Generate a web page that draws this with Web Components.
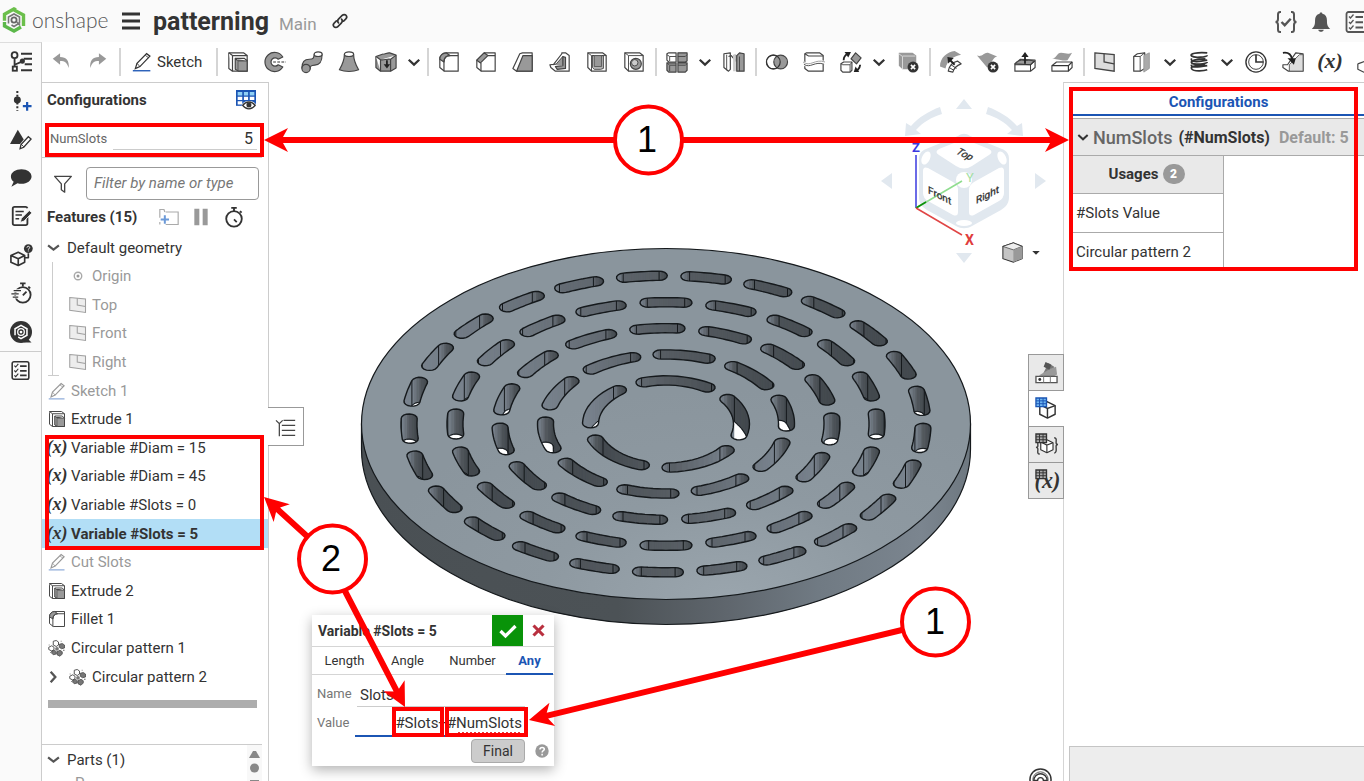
<!DOCTYPE html>
<html lang="en">
<head>
<meta charset="utf-8">
<title>patterning | Main</title>
<style>
html,body{margin:0;height:100%}
body{font-family:Roboto,"Open Sans",sans-serif;font-size:15px;color:#333;background:#fff;overflow:hidden}
</style>
</head>
<body>
<cad-app></cad-app>
<script>
const BASE = `*,:host{box-sizing:border-box}
button{font:inherit;color:inherit;background:none;border:0;padding:0;margin:0;display:flex;align-items:center;justify-content:center}
input{font:inherit;color:inherit;background:none;border:0;padding:0;margin:0;min-width:0;outline:0}
a{color:inherit;text-decoration:none}
svg{display:block}`;

function define(name, html, setup) {
  const t = document.createElement('template');
  t.innerHTML = html;
  customElements.define(name, class extends HTMLElement {
    constructor() {
      super();
      this.attachShadow({mode: 'open'}).append(t.content.cloneNode(true));
    }
    connectedCallback() { if (setup) setup(this, this.shadowRoot); }
  });
}

/* ---------- icons: all on a 24 x 24 grid ---------- */
const D = 'stroke="#444" stroke-width="1.300" fill="#fff" stroke-linejoin="round"';
const G = 'stroke="#444" stroke-width="1.300" fill="#999" stroke-linejoin="round"';
const ERR = '<circle cx="17.500" cy="17.500" r="6" fill="#333"/><path d="M15.200 15.200l4.600 4.600m0-4.600l-4.600 4.600" stroke="#fff" stroke-width="1.800"/>';
const GRID = (c, f) => `<path d="M1 1h11v9H1z" fill="${f}" stroke="${c}" stroke-width="1.400"/><path d="M4.700 1v9M8.400 1v9M1 4h11M1 7h11" stroke="${c}"/>`;
const CUBE = '<path d="M5 8l8-3 8 4v9l-8 4-8-4z" fill="#fff" stroke="#333" stroke-width="1.500" stroke-linejoin="round"/><path d="M5 8l8 4 8-3M13 12v10" fill="none" stroke="#333" stroke-width="1.500"/>';
const LIST = '<rect x="2.500" y="2" width="19" height="20" rx="2" fill="none" stroke="currentColor" stroke-width="1.800"/><path d="M5 6.500l1.500 1.500 3-3.500M5 12l1.500 1.500 3-3.500M5 17.500L6.500 19l3-3.500" fill="none" stroke="currentColor" stroke-width="1.300"/><path d="M11.500 7H19M11.500 12.300H19M11.500 17.600H19" stroke="currentColor" stroke-width="2"/>';
const STOPWATCH = '<circle cx="12" cy="14" r="8.500" fill="none" stroke="#333" stroke-width="2"/><path d="M9 2h6M12 2v4M18.500 5.500l1.800 1.800M12 14.500l3 3" stroke="#333" stroke-width="2" fill="none"/>';
const ICONS = {
  logo: '<path d="M14 1.800L12 1 2.500 6.300v6.500" fill="none" stroke="#6bbf4b" stroke-width="3.400"/><path d="M12 2l9.500 5v11" fill="none" stroke="#6bbf4b" stroke-width="3.400"/><path d="M2.500 14v4L12 23l7-4" fill="none" stroke="#5cb84a" stroke-width="3.400"/><circle cx="12" cy="12" r="2.600" fill="none" stroke="#666" stroke-width="1.800"/><path d="M6.500 15.500V9L12 6l5.500 3v6L12 18.500l-2.500-1.500M15 14l3 3.500" fill="none" stroke="#777" stroke-width="1.600"/>',
  menu: '<path d="M3 5h18M3 12h18M3 19h18" stroke="#333" stroke-width="3"/>',
  link: '<g fill="none" stroke="#333" stroke-width="2.200" stroke-linecap="round"><path d="M10 14.500c-2-2-1-4 .3-5.300l4.600-4.600c1.800-1.800 4.100-1.300 5.100-.2s1.400 3.200-.2 4.800l-3 3"/><path d="M14 9.500c2 2 1 4-.3 5.300l-4.600 4.600c-1.800 1.800-4.100 1.300-5.100.2s-1.400-3.200.2-4.800l3-3"/></g>',
  status: '<path d="M7 2H6C4.500 2 4 3 4 4.500V9c0 2-1 3-2.500 3C3 12 4 13 4 15v4.500C4 21 4.500 22 6 22h1M17 2h1c1.500 0 2 1 2 2.500V9c0 2 1 3 2.500 3-1.500 0-2.500 1-2.500 3v4.500c0 1.500-.5 2.500-2 2.500h-1" fill="none" stroke="#555" stroke-width="2"/><path d="M7.500 12l3.200 3.200 6-6.500" fill="none" stroke="#555" stroke-width="2.400"/>',
  bell: '<path d="M12 1.500c1 0 1.500.5 1.500 1.500 3.500.8 5 3.500 5 7 0 5 .5 6.500 3.500 9.500H2c3-3 3.500-4.500 3.500-9.500 0-3.500 1.500-6.200 5-7 0-1 .5-1.500 1.500-1.500zM9 20.500h6c-.5 3-5.500 3-6 0z" fill="#555"/>',
  list: LIST,
  tree: '<g fill="none" stroke="#333" stroke-width="2"><circle cx="5" cy="4.500" r="3.200"/><path d="M5 8v9M5 15l8-3.500"/><rect x="3" y="17" width="4.500" height="4.500"/><path d="M12 3h12M15 8.500h9M16 14.500h8M12 21h12" stroke-width="2.200"/></g><circle cx="13.500" cy="11" r="2.800" fill="#333"/>',
  add: '<path d="M8 1v22" stroke="#333" stroke-width="2.200" stroke-dasharray="2.200 2"/><circle cx="8" cy="11" r="3.800" fill="#333"/><path d="M14 17.500h9.500M18.700 13v9.500" stroke="#1b55b4" stroke-width="2.400"/>',
  appearance: '<path d="M8.500 2L0 17.500h11l4-5z" fill="#333"/><path d="M11 22.500l1-4.500 8-8.500 3 2.500-8 9z" fill="#fff" stroke="#333" stroke-width="1.400"/><path d="M12 17.500l3 3" stroke="#333"/>',
  comment: '<path d="M12.500 2.500C18.800 2.500 23.500 6 23.500 10.300s-4.700 8-11 8c-1.500 0-3-.2-4.300-.6L1.500 21.500l2.500-5.300C2.100 14.900 1 12.500 1 10.300 1 6 6.200 2.500 12.500 2.500z" fill="#333"/>',
  note: '<path d="M19 12v8c0 1.200-.8 2-2 2H5c-1.200 0-2-.8-2-2V4c0-1.200.8-2 2-2h12c1 0 1.700.5 2 1.500" fill="none" stroke="#333" stroke-width="2"/><path d="M6 7h9M6 11h7M6 15h4" stroke="#333" stroke-width="1.700"/><path d="M11 19l1.500-4.500L21 6l3 2.500-8.500 9z" fill="#333" stroke="#fafafa"/>',
  help3d: '<g fill="none" stroke="#333" stroke-width="1.800" stroke-linejoin="round"><path d="M1 12.500L9 9l7 3.500V20l-7 3.500L1 20zM1 12.500l8 3.500 7-3.500M9 15.500V23"/><path d="M16 15h4V10"/></g><circle cx="20" cy="5" r="4.800" fill="#333"/><path d="M18.500 4c0-2 3-2 3 0 0 1-1.500 1-1.500 2.200m0 .9v1" fill="none" stroke="#fff"/>',
  perf: '<circle cx="14" cy="14" r="8.500" fill="none" stroke="#333" stroke-width="2"/><path d="M11 1.500h6M14 1.500V5M20 5l2 2M14 14.500l4-4" stroke="#333" stroke-width="2"/><path d="M3 9.500h9M1.500 13h9M2.500 16.500h7" stroke="#fafafa" stroke-width="3"/><path d="M4 9.500h8M1.500 13h8M3 16.500h6" stroke="#333" stroke-width="1.300"/>',
  learn: '<circle cx="12" cy="12" r="12" fill="#333"/><path d="M18 18l5.500 5.500h-8z" fill="#333"/><path d="M5.500 15.500v-7L12 4.800l6.500 3.700v7L12 19.200l-3-1.700" fill="none" stroke="#fff" stroke-width="1.700"/><circle cx="12" cy="12" r="3.600" fill="none" stroke="#fff" stroke-width="1.400"/><circle cx="12" cy="12" r="1.500" fill="#fff"/>',
  undo: '<path d="M3 8.500L11 2.500v4c7 0 10 4 9.500 12-2-5.500-4-7.500-9.500-7.500v4z" fill="#999"/>',
  redo: '<path d="M21 8.500L13 2.500v4c-7 0-10 4-9.500 12 2-5.500 4-7.500 9.500-7.500v4z" fill="#999"/>',
  pencil: '<path d="M4 20l2-6.500L17.500 2l4 3L9.500 17.500z" fill="#fff" stroke="#333" stroke-width="1.500"/><path d="M6 13.500l3.500 4M16 4l4 3" stroke="#333"/><path d="M1 22.500h21" stroke="#1b55b4" stroke-width="1.600"/>',
  chevron: '<path d="M5 9l7 6.500L19 9" fill="none" stroke="currentColor" stroke-width="3"/>',
  fold: '<path d="M2 8l10 8 10-8" fill="none" stroke="#555" stroke-width="4"/>',
  right: '<path d="M8 3l8 9-8 9" fill="none" stroke="currentColor" stroke-width="4"/>',
  extrude: `<path d="M2 2h16l4 3v17H6l-4-3z" ${D}/><path d="M2 2l4 3v17M6 5h16" ${D} fill="none"/><path d="M9 8l2 2h11v12h-9l-4-2z" ${G}/><path d="M9 8h10l3 3" ${D} fill="#ccc"/><path d="M12 11v11M12 11h10" stroke="#555"/>`,
  revolve: `<path d="M20.500 6.500A10.500 10.500 0 1 0 20.500 17.500L15.500 15a4.500 4.500 0 1 1 0-6z" ${G}/><path d="M10 12h14" stroke="#333" stroke-width="1.300" stroke-dasharray="3 1.500"/>`,
  sweep: `<path d="M1 18.500c0-7 3.500-9.500 8-9.500 5 0 5-2 5.500-5.500h8.500c0 8-2 11.500-8 12-4.500.4-5 1-5 4z" ${G}/><ellipse cx="18.700" cy="3.500" rx="4.300" ry="2.500" ${D}/><circle cx="5.500" cy="19" r="4.500" ${G}/>`,
  loft: `<path d="M7 3.500c0 6-2 11-5.500 17 6 2.500 15 2.500 21 0C19 14.500 17 9.500 17 3.500z" ${G}/><ellipse cx="12" cy="3.500" rx="5" ry="2.500" ${D}/>`,
  thicken: `<path d="M1 6l7-2.500c3 .5 5-2 8-1.500l7 2.500v14L17 22H6l-5-4z" ${G}/><path d="M1 6l5 3.500V22M6 9.500c4 1 7-1.500 11-.5l6-4.500M17 9v13" ${D} fill="none"/><path d="M13 10v6" stroke="#222" stroke-width="2"/><path d="M9.500 14.500h7L13 19z" fill="#222"/>`,
  fillet: `<path d="M2 9c0-4 3-7 7-7h13v20H7l-5-4z" ${D}/><path d="M2 9c0-4 3-7 7-7l4 3c-4 0-6.500 2.500-6.500 7z" ${G}/><path d="M22 5H13C9 5 6.500 8 6.500 12v10" stroke="#444" stroke-width="1.300" fill="none"/>`,
  chamfer: `<path d="M2 10l8-8h12v20H7l-5-4z" ${D}/><path d="M2 10l8-8 4 3-8 8z" ${G}/><path d="M14 5h8M6.500 13v9" stroke="#444" stroke-width="1.300"/>`,
  draft: `<path d="M1 19L8.500 3l3-1h10.500v20H5z" ${D}/><path d="M5 22L12 5h10v17z" ${G}/>`,
  rib: `<path d="M1 15l4-.5L14 3l0-1h4l4 3v17H7l-5-4z" ${D}/><path d="M7 17l8-1V6l3 1v12l-9 1z" ${G}/><path d="M5 15l3-1 7-8v10" fill="#999" stroke="#444"/>`,
  shell: `<path d="M2 2h16l4 3v17H6l-4-4z" ${D}/><path d="M7 5h12v14l-3 1H9l-2-2z" fill="#bbb" stroke="#444"/><path d="M2 2l4 3v17M6 5h16" stroke="#444" fill="none"/><path d="M9 5v12h8V5z" fill="#999" stroke="#555"/>`,
  hole: `<path d="M2 2h16l4 3v17H6l-4-4z" ${D}/><path d="M2 2l4 3v17M6 5h16" stroke="#444" fill="none"/><circle cx="14" cy="14" r="6" ${G}/><circle cx="12.800" cy="12.800" r="3.500" fill="#ccc" stroke="#444"/>`,
  pattern: `<path d="M1 3l2-1h8v10H3l-2-2z" ${D}/><path d="M13 2h10v9l-2 1h-8zM1 13h10v10H3l-2-2zM13 13h10v8l-2 2h-8z" ${G}/><path d="M1 4l3 2h7M4 6v5M13 6h8l2-2M4 16v6M1 13l3 2.500h7M13 15.500h8l2-1.500" stroke="#444" fill="none"/>`,
  mirror: `<path d="M1 3L8 2v18l-2 2-5-4z" ${D}/><path d="M6 6l3-1 5 6V5h-3" ${D}/><path d="M11 4l3-1v19h-3z" fill="#ccc"/><path d="M15 5l3-3 5 1v19h-8z" ${G}/><path d="M4 4v17M18 6v16" stroke="#444"/>`,
  boolean: `<circle cx="8" cy="12" r="7.500" ${D}/><circle cx="16" cy="12" r="7.500" ${G}/><circle cx="8" cy="12" r="7.500" fill="none" stroke="#333" stroke-width="1.300"/>`,
  split: `<path d="M2 3l2-1h14l4 3v17H6l-4-3z" ${D}/><path d="M2 3l4 2.500h16" fill="none" stroke="#444" stroke-width="1.200"/><path d="M0 13c8 6 13-4 24 0" fill="none" stroke="#fff" stroke-width="4"/><path d="M0 12c8 6 13-4 24 0" fill="none" stroke="#999"/><path d="M1 14.500c7 5 12-4 22 0" fill="none" stroke="#444"/>`,
  transform: `<path d="M1 14l3-2h9v9l-2 2H3l-2-2z" ${D}/><path d="M1 14l2 1h8v8M11 15l2-3" fill="none" stroke="#444"/><path d="M17 2l6 5.500-5 6.500-6-5.500z" ${G}/><path d="M4 10c0-3 1-5 4-7" stroke="#222" stroke-width="2" fill="none"/><path d="M5 1l7 0-3 6z" fill="#222"/><path d="M22 15c0 3-1 4-3 6" stroke="#222" stroke-width="2" fill="none"/><path d="M21 23l-6 0 2-6z" fill="#222"/>`,
  delpart: `<path d="M2 2h15l4 3v15H6l-4-4z" fill="#999"/><path d="M2 3l4 3v14M6 5.500h14" stroke="#ddd" fill="none"/>${ERR}`,
  moveface: `<path d="M0 17C0 7 8 1 16 0l7 4C14 6 8 10 6 19z" fill="#999"/><path d="M9 22c1-7 6-10 10-11l4 3c-5 2-8 5-9 9z" ${D}/><path d="M12 15l6 4M10 18l5 3" stroke="#333"/><path d="M16 15L10 9" stroke="#222" stroke-width="2"/><path d="M8 6.500l7 1-6 6z" fill="#222"/>`,
  delface: `<path d="M0 5c6 2 8-4 12-3l10 4c-5 1-6 8-11 12z" fill="#999"/>${ERR}`,
  replace: `<path d="M1 14l6-5 16 1v8l-5 4H1z" ${D}/><path d="M1 14c4-4 6-5 9-4s6-1 12 1l-4 4z" ${G}/><path d="M1 15h17l5-4M18 15v7" fill="none" stroke="#333"/><path d="M12 14V5" stroke="#222" stroke-width="2"/><path d="M8 6.500h8L12 1z" fill="#222"/>`,
  offset: `<path d="M1 8c5 1 5-6 10-6s7 2 12 0l-5 8c-5 1-8 0-17-2z" fill="#999"/><path d="M1 16l5-4h17v6l-4 4H1z" ${D}/><path d="M1 16h18l4-4M19 16v6" fill="none" stroke="#333" stroke-width="1.300"/>`,
  plane: '<path d="M1 2l21 2v18L1 19z" fill="#ddd" stroke="#444" stroke-width="1.400"/><path d="M11 3V12l11 2" fill="none" stroke="#444" stroke-width="1.400"/>',
  planeoff: `<path d="M3 6l4-3 8-1v17l-5 3H3z" ${D}/><path d="M3 6h7v16M10 6l5-4" fill="none" stroke="#444"/><path d="M14 5l6-3v17l-6 4z" fill="#aaa" stroke="#999"/>`,
  helix: '<path d="M21 2C10 1 1 3 4 5.500s17 1 17-1M4 8c-2 4 5 4.500 17 2M19 8.500c-10 0-17 2-15 4.500s17 1 17-1M4 15c-2 3 5 3 17 1M19 15.500c-10 0-17 1-15 4s13 2.500 17 1" fill="none" stroke="#333" stroke-width="1.900"/>',
  sector: '<circle cx="12" cy="12" r="11" fill="#fff" stroke="#333" stroke-width="1.500"/><circle cx="12" cy="12" r="8" fill="#fff" stroke="#333"/><path d="M12 4v8h8" fill="none" stroke="#333" stroke-width="1.800"/>',
  derived: `<path d="M1 15h5l9-13 8 1v19H7l-6-4z" ${D}/><path d="M8 15L19 4h4v18H8z" fill="#ddd" stroke="#555"/><path d="M1 2c6-1 9 2 10 7" fill="none" stroke="#222" stroke-width="2"/><path d="M6 8h9l-2 7z" fill="#222"/>`,
  variable: '<text x="12" y="19" text-anchor="middle" font-family="Liberation Serif,serif" font-style="italic" font-weight="700" font-size="24" fill="#333">(x)</text>',
  partial: `<path d="M2 14l8-3v-6h6M2 14v6l6 3 8-2v-8" ${D}/>`,
  configtable: '<path d="M0 0h24v19H0z" fill="#1b55b4"/><path d="M2 2.500h5.500v4H2zM9.500 2.500h5v4h-5zM16.500 2.500H22v4h-5.500z" fill="#8fd0f5"/><path d="M2 8h5.500v4H2zM9.500 8h5v4h-5zM16.500 8H22v4h-5.500zM2 13.500h5.500v4H2z" fill="#fff"/><ellipse cx="15.500" cy="18.500" rx="8.500" ry="5.300" fill="#fff"/><path d="M8 18.500c4-5.500 11-5.500 15 0-4 5.500-11 5.500-15 0z" fill="#fff" stroke="#333" stroke-width="1.600"/><circle cx="15.500" cy="18" r="3" fill="#333"/>',
  funnel: '<path d="M2 4h20l-8 9V23l-4-3v-7z" fill="none" stroke="#444" stroke-width="1.600" stroke-linejoin="round"/>',
  folder: '<path d="M7 6L6 3H1v10M8 6h15v15H8M1 21v-3" fill="none" stroke="#aaa" stroke-width="1.400"/><path d="M2 15h10M7 10v10" stroke="#6c9ad8" stroke-width="2.400"/>',
  pause: '<path d="M4 2h6v20H4zM14 2h6v20h-6z" fill="#999"/>',
  stopwatch: STOPWATCH,
  origin: '<circle cx="12" cy="12" r="5" fill="none" stroke="#555" stroke-width="1.800"/><circle cx="12" cy="12" r="2" fill="#333"/>',
  circpattern: `<g stroke="#444" stroke-width="1.200" fill="#fff"><path d="M7 3l4-1 3 2v4l-3 2-4-2zM1 11l4-2 3 2v3l-3 2-4-2z"/></g><g stroke="#444" fill="#777"><path d="M15 7l4-1 3 2v4l-4 1-3-2zM5 16l4-1 2 2v3l-4 1-2-2zM12 17l4-2 3 2v3l-3 3-4-2z"/></g><circle cx="12" cy="13" r="2.500" fill="#777"/><path d="M1 8h1M20 15h2M3 18h1M17 3h1" stroke="#333"/>`,
  tree2: '<path d="M0 4l4 4 4-4M4 8v15" fill="none" stroke="#444" stroke-width="1.500"/><path d="M9 4h14M7 10h16M7 16h16M7 22h16" stroke="#444" stroke-width="1.500"/>',
  swatch: '<path d="M8 14L14 2l6 4-4 10z" fill="#777"/><path d="M4 15L16 8l6-2 1 8-7 4z" fill="#999"/><path d="M11 1l6 3-2 5-6-3z" fill="#555"/><path d="M1 16h22v6.500H1z" fill="#fff" stroke="#555" stroke-width="1.400"/><path d="M9 16v6.500M16 16v6.500" stroke="#777"/><circle cx="5" cy="19.300" r="1.500" fill="#333"/>',
  tabconfig: CUBE + GRID('#1b55b4', '#6fb5f0'),
  tabbom: '<g transform="translate(2 3) scale(.8)">' + CUBE + '</g><path d="M5 8c-3 0-2 3-2 5s-1 2-2 2c1 0 2 0 2 2s-1 5 2 5M20 5c3 0 2 3 2 5s1 2 2 2c-1 0-2 0-2 2s1 7-2 7" fill="none" stroke="#444" stroke-width="1.500"/>' + GRID('#333', '#aaa'),
  tabvar: '<text x="13" y="20" text-anchor="middle" font-family="Liberation Serif,serif" font-style="italic" font-weight="700" font-size="23" fill="#333">(x)</text>' + GRID('#333', '#aaa'),
  check: '<path d="M3 12l6 6L21 6" fill="none" stroke="#fff" stroke-width="4"/>',
  cross: '<path d="M4 4l16 16M20 4L4 20" fill="none" stroke="#b9303f" stroke-width="5"/>',
  help: '<circle cx="12" cy="12" r="11.500" fill="#999"/><path d="M8.500 9.500c0-5 7.500-4.500 7.500-.5 0 2.500-3.800 2.500-3.800 5.500M12.200 16.500v3" fill="none" stroke="#fff" stroke-width="2.600"/>',
  shaded: '<path d="M1 5l12-4 10 4v14l-10 4L1 19z" fill="#c4c4c4" stroke="#333" stroke-width="1.200"/><path d="M1 5l12-4 10 4-10 4z" fill="#eee" stroke="#333" stroke-width=".8"/><path d="M13 9l10-4v14l-10 4z" fill="#999"/>',
  caret: '<path d="M3 7h18l-9 9z" fill="#333"/>',
  measure: '<circle cx="12" cy="12" r="11" fill="#fff" stroke="#333" stroke-width="1.600"/><circle cx="12" cy="12" r="8" fill="none" stroke="#555"/><path d="M5 13a7 7 0 0 1 14 0h-4a3 3 0 0 0-6 0z" fill="#fff" stroke="#333" stroke-width="1.400"/>'
};
define('cad-icon', `<style>:host{display:block;flex:none;width:var(--s,20px);height:var(--s,20px)}svg{display:block;width:100%;height:100%;overflow:visible}</style><svg viewBox="0 0 24 24" aria-hidden="true"></svg>`,
  (el, r) => { r.querySelector('svg').innerHTML = ICONS[el.getAttribute('name')] || ''; });

/* ---------- header ---------- */
define('cad-header', `<style>${BASE}
:host{display:flex;align-items:center;height:42px;background:#fafafa;padding-left:2px}
.brand{display:flex;align-items:center;gap:6px;font:300 21px/24px Lato,sans-serif;color:#555;margin-top:-3px;width:116px}
h1{font-size:25px;line-height:28px;font-weight:700;margin:2px 10px 0}
.ws{font-size:17px;color:#999;margin-right:14px;padding-top:5px}
.right{margin-left:auto;display:flex;gap:12px;margin-right:-4px;color:#555;padding-top:2px}
</style>
<a class="brand" href="#"><cad-icon name="logo" style="--s:24px"></cad-icon>onshape</a>
<button aria-label="Menu" style="margin-left:1px"><cad-icon name="menu" style="--s:24px"></cad-icon></button>
<h1>patterning</h1><span class="ws">Main</span>
<button aria-label="Copy link"><cad-icon name="link" style="--s:18px"></cad-icon></button>
<div class="right"><button aria-label="Status"><cad-icon name="status" style="--s:24px"></cad-icon></button>
<button aria-label="Notifications"><cad-icon name="bell" style="--s:22px"></cad-icon></button>
<button aria-label="Tasks"><cad-icon name="list" style="--s:24px"></cad-icon></button></div>`);

/* ---------- left rail ---------- */
define('cad-rail', `<style>${BASE}
:host{display:block;flex:none;width:42px;background:#fafafa;border-right:1px solid #ccc;border-top:1px solid #ddd}
nav{display:flex;flex-direction:column;height:309px;border-bottom:1px solid #ccc}
nav button{flex:1}.last{width:100%;height:37px}
</style><nav aria-label="Document panels"></nav><button class="last" aria-label="Tasks"><cad-icon name="list" style="--s:21px"></cad-icon></button>`,
  (el, r) => { r.querySelector('nav').innerHTML = ['tree','add','appearance','comment','note','help3d','perf','learn'].map(n => `<button aria-label="${n}"><cad-icon name="${n}" style="--s:22px"></cad-icon></button>`).join(''); });

/* ---------- toolbar ---------- */
define('cad-toolbar', `<style>${BASE}
:host{display:flex;align-items:center;height:40px;background:#fff;overflow:hidden}
button{width:37px;height:38px;flex:none}
.chev{width:20px;color:#333;--s:18px}
i{width:2px;height:28px;background:#d5d5d5;flex:none;margin:0 1px 0 3px}
.sk{width:auto;gap:5px;padding:0 11px 0 10px}
</style>`, (el, r) => {
  const items = 'undo redo | SKETCH | extrude revolve sweep loft thicken v | fillet chamfer draft rib shell hole | pattern v mirror | boolean split transform v delpart | moveface delface replace offset | plane planeoff v helix v sector derived variable partial'.split(' ');
  r.innerHTML += items.map(n => n === '|' ? '<i></i>' : n === 'v' ? '<button class="chev" aria-label="More"><cad-icon name="chevron"></cad-icon></button>'
    : n === 'SKETCH' ? '<button class="sk"><cad-icon name="pencil"></cad-icon>Sketch</button>'
    : `<button aria-label="${n}"><cad-icon name="${n}" style="--s:22px"></cad-icon></button>`).join('');
});

/* ---------- feature panel ---------- */
define('feature-row', `<style>${BASE}
:host{display:flex;align-items:center;padding-left:6px;gap:5px;color:#333}
:host([dim]){color:#999}
:host([dim]) cad-icon{opacity:.5}
:host([selected]){background:#b2def6;font-weight:700}
:host([child]){padding-left:27px}
:host([top]){gap:7px;padding-left:5px}
:host([group]) .pre{display:block}
.pre{display:none;color:#555;margin:0 4px 0 -2px}
</style><cad-icon class="pre" name="right" style="--s:14px"></cad-icon><cad-icon class="ic"></cad-icon><span><slot></slot></span>`,
  (el, r) => {
    const i = r.querySelector('.ic');
    i.setAttribute('name', el.getAttribute('icon'));
    i.style.setProperty('--s', el.hasAttribute('top') ? '13px' : '18px');
    i.connectedCallback();
  });

define('feature-panel', `<style>${BASE}
:host{display:flex;flex-direction:column;flex:none;width:227px;border-top:1px solid #ccc;border-right:1px solid #ccc;background:#fff;min-height:0}
h2{font-size:15px;line-height:20px;margin:0;font-weight:700;flex:1}
.conf{display:flex;align-items:center;height:34px;padding:0 12px 0 5px;flex:none}
.num{display:flex;align-items:center;height:38px;flex:none;margin:3px 6px 0 0;padding:0 5px 0 8px;gap:6px;border-bottom:1px solid #ccc;color:#666;font-size:13px}
.num label{width:57px}
.num input{flex:1;text-align:right;font-size:16px;color:#333;border-bottom:1px solid #ccc;height:23px;padding-right:4px}
.filter{display:flex;align-items:center;gap:13px;height:42px;flex:none;padding:8px 9px 0 11px}
.filter input{flex:1;height:33px;border:1px solid #999;border-radius:4px;padding:0 7px;font-style:italic}
.filter input::placeholder{color:#777;opacity:1}
.feat{display:flex;align-items:center;height:33px;flex:none;padding-left:5px;gap:12px}
.feat h2{flex:none;width:100px}
.list{display:grid;grid-auto-rows:1fr;height:458px;flex:none;position:relative}
.guide{position:absolute;left:6px;top:29px;height:114px;width:11px;border-bottom:1px solid #ccc}
.guide::before{content:"";position:absolute;left:4px;top:0;bottom:0;border-left:1px solid #ccc}
feature-row[top]{height:29px}
.bar{height:8px;background:#adadad;margin:9px 11px 0 6px;flex:none}
.parts{margin-top:36px;margin-right:6px;border-top:1px solid #ccc;display:flex;flex:1;overflow:hidden;min-height:0}
.parts div{flex:1}
.p{padding-left:33px;color:#999}
.sb{flex:none;width:15px;height:60px;background:#f8f8f8}
</style>
<div class="conf"><h2>Configurations</h2><button aria-label="Show configurations"><cad-icon name="configtable"></cad-icon></button></div>
<div class="num"><label for="n">NumSlots</label><input id="n" value="5"></div>
<div class="filter"><cad-icon name="funnel"></cad-icon><input aria-label="Filter" placeholder="Filter by name or type"></div>
<div class="feat"><h2>Features (15)</h2><button aria-label="Add folder"><cad-icon name="folder"></cad-icon></button><button aria-label="Pause"><cad-icon name="pause"></cad-icon></button><button aria-label="Timing"><cad-icon name="stopwatch" style="--s:22px"></cad-icon></button></div>
<div class="list"><span class="guide"></span>
<feature-row top icon="fold">Default geometry</feature-row>
<feature-row child dim icon="origin">Origin</feature-row>
<feature-row child dim icon="plane">Top</feature-row>
<feature-row child dim icon="plane">Front</feature-row>
<feature-row child dim icon="plane">Right</feature-row>
<feature-row dim icon="pencil">Sketch 1</feature-row>
<feature-row icon="extrude">Extrude 1</feature-row>
<feature-row icon="variable">Variable #Diam = 15</feature-row>
<feature-row icon="variable">Variable #Diam = 45</feature-row>
<feature-row icon="variable">Variable #Slots = 0</feature-row>
<feature-row selected icon="variable">Variable #Slots = 5</feature-row>
<feature-row dim icon="pencil">Cut Slots</feature-row>
<feature-row icon="extrude">Extrude 2</feature-row>
<feature-row icon="fillet">Fillet 1</feature-row>
<feature-row icon="circpattern">Circular pattern 1</feature-row>
<feature-row group icon="circpattern">Circular pattern 2</feature-row></div>
<div class="bar"></div>
<div class="parts"><div><feature-row top icon="fold">Parts (1)</feature-row><div class="p">P</div></div>
<svg class="sb" viewBox="0 0 15 60"><path d="M2 13h11L9 6H6z" fill="#888"/><circle cx="7.500" cy="23" r="4.500" fill="#888"/><path d="M3 35h9v9H3z" fill="#888"/></svg></div>`);

/* ---------- the slotted disc ---------- */
define('slotted-disc', `<style>:host{display:block;width:612px;height:380px}svg{display:block;overflow:visible}</style>
<svg width="612" height="380" viewBox="-306 -177 612 380" role="img" aria-label="Disc with circular slot patterns">
<defs><linearGradient id="side"><stop offset="0" stop-color="#4a5054"/><stop offset=".42" stop-color="#4c5256"/><stop offset=".6" stop-color="#5f666d"/><stop offset=".75" stop-color="#707a83"/><stop offset=".92" stop-color="#7b858f"/><stop offset="1" stop-color="#6e7880"/></linearGradient>
<radialGradient id="top" cx=".6" cy="1" r=".6"><stop offset="0" stop-color="#9aa5ad"/><stop offset=".5" stop-color="#8e99a1"/><stop offset="1" stop-color="#8a959d"/></radialGradient></defs>
<path d="M-304.500 0v25a304.500 175.500 0 0 0 609 0V0z" fill="url(#side)" stroke="#15191c" stroke-width="1.200"/>
<ellipse rx="304.500" ry="175.500" fill="url(#top)" stroke="#15191c" stroke-width="1.200"/><g></g></svg>`, (el, r) => {
  const K = 0.577, H = 25, W = 8, rad = Math.PI / 180;
  // radius, slot count, angle of one slot, half of its arc
  const rings = [[75.5, 5, -82, 25], [120.5, 10, -81.2, 11.2], [166, 15, -93, 6.8], [211, 20, -90, 4.9], [257, 25, -81, 3.9]];
  const stops = [[66, 72, 77], [86, 92, 98], [122, 132, 143]];
  const shade = nx => {
    const v = nx < 0 ? nx + 1 : nx, a = nx < 0 ? stops[0] : stops[1], b = nx < 0 ? stops[1] : stops[2];
    return 'rgb(' + a.map((c, i) => Math.round(c + (b[i] - c) * Math.min(1, v))) + ')';
  };
  const f = n => n.toFixed(1);
  let out = '', id = 0;
  for (const [R, n, start, half] of rings) for (let k = 0; k < n; k++) {
    const c = (start + k * 360 / n) * rad, a0 = c - half * rad, a1 = c + half * rad, pts = [];
    const push = (x, y, nx, ny, j) => pts.push({x, y: y * K, nx, ny, j});
    for (let i = 0; i <= 10; i++) { const a = a0 + (a1 - a0) * i / 10; push((R + W) * Math.cos(a), (R + W) * Math.sin(a), -Math.cos(a), -Math.sin(a), i % 10 === 0); }
    for (let i = 1; i < 8; i++) { const b = a1 + Math.PI * i / 8; push(R * Math.cos(a1) + W * Math.cos(b), R * Math.sin(a1) + W * Math.sin(b), -Math.cos(b), -Math.sin(b)); }
    for (let i = 0; i <= 10; i++) { const a = a1 - (a1 - a0) * i / 10; push((R - W) * Math.cos(a), (R - W) * Math.sin(a), Math.cos(a), Math.sin(a), i % 10 === 0); }
    for (let i = 1; i < 8; i++) { const b = a0 + Math.PI + Math.PI * i / 8; push(R * Math.cos(a0) + W * Math.cos(b), R * Math.sin(a0) + W * Math.sin(b), -Math.cos(b), -Math.sin(b)); }
    const path = dy => 'M' + pts.map(p => f(p.x) + ' ' + f(p.y + dy)).join('L') + 'Z';
    let edges = '';
    const walls = [];
    pts.forEach((p, i) => {
      const q = pts[(i + 1) % pts.length];
      if (p.ny + q.ny > 0) {
        const s = shade((p.nx + q.nx) / 2);
        walls.push([p.y + q.y, `<path d="M${f(p.x)} ${f(p.y)}L${f(q.x)} ${f(q.y)}v${H}L${f(p.x)} ${f(p.y + H)}z" fill="${s}" stroke="${s}" stroke-width="1.500" stroke-linejoin="round"/>`]);
      }
      if (p.j && p.ny > 0) edges += `M${f(p.x)} ${f(p.y)}v${H}`;
    });
    walls.sort((a, b) => a[0] - b[0]);
    id++;
    out += `<clipPath id="c${id}"><path d="${path(0)}"/></clipPath><g clip-path="url(#c${id})"><path d="${path(0)}" fill="#fff"/>${walls.map(w => w[1]).join('')}<path d="${edges}" stroke="#15191c"/><path d="${path(H)}" fill="none" stroke="#15191c"/></g><path d="${path(0)}" fill="none" stroke="#15191c" stroke-width="1.400"/>`;
  }
  r.querySelector('g').innerHTML = out;
});

/* ---------- view cube ---------- */
define('view-cube', `<style>:host{display:block}svg{display:block}text{font-family:Roboto,sans-serif}</style>
<svg width="170" height="170" viewBox="879 95 170 170" role="img" aria-label="View cube">
<g fill="#e1e8ef"><path d="M964 99l8 10h-16zM964 263l8-10h-16zM881 181l11-8v16zM1046 181l-11-8v16z"/>
<path d="M905 136l1-13 5 3c8-9 18-15 29-19l2 7c-10 3-19 8-26 16l5 4zM1023 136l-1-13-5 3c-8-9-18-15-29-19l-2 7c10 3 19 8 26 16l-5 4z"/>
<path d="M958 136c4-3 8-3 12 0l32 13c5 2 7 5 7 10v38c0 6-3 10-8 13l-29 16c-5 3-11 3-16 0l-29-16c-5-3-8-7-8-13v-38c0-5 2-8 7-10z"/></g>
<g fill="#fff"><path d="M939 149l20-8q5-2 10 0l20 8q5 3 0 6l-17 11q-8 5-16 0l-17-11q-5-3 0-6z"/>
<path d="M923 171q0-5 5-3l25 14q5 3 5 8v22q0 5-5 3l-25-14q-5-3-5-8zM1004 171q0-5-5-3l-25 14q-5 3-5 8v22q0 5 5 3l25-14q5-3 5-8z"/>
<circle cx="964" cy="180" r="8"/><ellipse cx="926" cy="158" rx="4" ry="7" transform="rotate(25 926 158)"/><ellipse cx="1002" cy="158" rx="4" ry="7" transform="rotate(-25 1002 158)"/><ellipse cx="964" cy="223" rx="8" ry="3"/></g>
<g fill="none" stroke-width="1.500"><path d="M916 208V155" stroke="#3a3adf"/><path d="M916 208l46-27" stroke="#8fdd8f"/><path d="M916 208l10-6" stroke="#0a8f0a"/><path d="M916 208l46 27" stroke="#e04545"/></g>
<g font-size="13" font-weight="700"><text x="912" y="152" fill="#3a3adf">Z</text><text x="966" y="182" fill="#a5dfa5" font-weight="400">Y</text><text x="965" y="245" fill="#e03c3c" font-size="14">X</text></g>
<g font-size="10" fill="#333" stroke="#333" stroke-width=".3"><text transform="translate(928 193) skewY(27)">Front</text><text transform="translate(976 204) skewY(-27)">Right</text><text transform="translate(955 153) rotate(27) skewX(-20)">Top</text></g>
</svg>`);

/* ---------- variable dialog ---------- */
define('variable-dialog', `<style>${BASE}
:host{display:block;width:242px;height:151px;background:#fff;box-shadow:0 4px 12px rgba(0,0,0,.3);font-size:13px}
header{display:flex;height:32px;border-bottom:1px solid #d5d5d5}
h2{font-size:14px;line-height:32px;margin:0 0 0 6px;flex:1}
header button{width:31px}
.ok{background:#099309}
.tabs{display:flex;height:28px;border-bottom:1px solid #d5d5d5;padding:0 1px 0 1px}
.tabs button{flex:62 1 0}.tabs .n{flex-grow:66}
.tabs .on{flex:0 0 47px;color:#1b55b4;font-weight:700;border-bottom:2px solid #1b55b4;height:28px}
.row{display:flex;height:29px;align-items:center;padding:0 29px 0 5px;color:#777;position:relative}
.row label{width:40px}
.row input{flex:1;color:#333;font-size:15px;height:24px;border-bottom:1px solid #ccc;margin-top:3px;padding-left:3px}
.row .v{border-bottom:2px solid #1b55b4;text-align:right;padding-right:3px;margin-left:-2px;height:25px}
.row svg{position:absolute;left:145px;top:23px}
.foot{display:flex;justify-content:flex-end;align-items:center;gap:10px;padding-right:5px;margin-top:2px}
.foot .final{width:54px;height:24px;background:#ccc;border:1px solid #aaa;border-radius:4px;font-size:14px}
</style>
<header><h2>Variable #Slots = 5</h2><button class="ok" aria-label="Accept"><cad-icon name="check"></cad-icon></button><button aria-label="Cancel"><cad-icon name="cross" style="--s:15px"></cad-icon></button></header>
<div class="tabs"><button>Length</button><button>Angle</button><button class="n">Number</button><button class="on">Any</button></div>
<div class="row" style="margin-top:4px"><label for="nm">Name</label><input id="nm" value="Slots"></div>
<div class="row"><label for="vl">Value</label><input class="v" id="vl" value="#Slots+#NumSlots"><svg width="66" height="4" aria-hidden="true"><path d="M0 3l2-2 2 2 2-2 2 2 2-2 2 2 2-2 2 2 2-2 2 2 2-2 2 2 2-2 2 2 2-2 2 2 2-2 2 2 2-2 2 2 2-2 2 2 2-2 2 2 2-2 2 2 2-2 2 2 2-2 2 2 2-2 2 2" fill="none" stroke="#e33"/></svg></div>
<div class="foot"><button class="final">Final</button><button aria-label="Help"><cad-icon name="help" style="--s:14px"></cad-icon></button></div>`);

/* ---------- viewport ---------- */
define('model-viewport', `<style>${BASE}
:host{display:flex;justify-content:center;align-items:flex-start;flex:1;min-width:0;position:relative;padding-top:165px}
view-cube{position:absolute;right:14px;top:13px}
.shade{position:absolute;right:22px;top:160px;gap:8px}
.feats{position:absolute;left:-1px;top:325px;width:36px;height:39px;border:1px solid #999;border-left:0;background:#fff}
variable-dialog{position:absolute;left:43px;top:533px}
.tabs{position:absolute;right:-1px;top:272px;display:flex;flex-direction:column;width:36px;border:1px solid #999;background:#999;gap:1px}
.tabs button{height:35px;background:#e9e9e9;--s:23px}
.tabs .on{background:#fff;margin-right:-1px}
.measure{position:absolute;right:11px;bottom:-10px;--s:23px}
</style><slotted-disc></slotted-disc><view-cube></view-cube>
<button class="shade" aria-label="Shading"><cad-icon name="shaded" style="--s:21px"></cad-icon><cad-icon name="caret" style="--s:10px"></cad-icon></button>
<button class="feats" aria-label="Feature list"><cad-icon name="tree2" style="--s:20px"></cad-icon></button>
<div class="tabs"><button aria-label="Appearance"><cad-icon name="swatch"></cad-icon></button><button class="on" aria-label="Configurations"><cad-icon name="tabconfig"></cad-icon></button><button aria-label="Custom tables"><cad-icon name="tabbom"></cad-icon></button><button aria-label="Variable table"><cad-icon name="tabvar"></cad-icon></button></div>
<button class="measure" aria-label="Measure"><cad-icon name="measure"></cad-icon></button><variable-dialog></variable-dialog>`);

/* ---------- configuration panel ---------- */
define('config-panel', `<style>${BASE}
:host{display:flex;flex-direction:column;width:301px;flex:none;border-top:1px solid #ccc;border-left:1px solid #d5d5d5;background:#fff}
.tab{margin-left:9px;height:33px;padding-top:6px;border-bottom:2px solid #1b55b4;color:#1b55b4;font-weight:700;margin-bottom:2px}
.head{display:flex;align-items:center;margin-left:9px;height:38px;background:#e9e9e9;border-top:1px solid #aaa;border-bottom:1px solid #aaa;white-space:nowrap;font-weight:700;font-size:16px;padding-left:2px}
.head b{font-size:18px;font-weight:500;color:#666;margin:0 6px 0 2px}
.head i{font-style:normal;color:#999;margin-left:9px}
table{border-collapse:collapse;margin-left:9px;width:151px}
th{height:37px;background:#e9e9e9;padding:0}
th div{display:flex;align-items:center;justify-content:center;gap:4px;padding-right:3px;line-height:20px}
th em{font:900 12px/20px Roboto,sans-serif;background:#999;color:#fff;border-radius:10px;width:22px}
td{height:39px;padding:0 0 0 3px}
th,td{border:0;border-bottom:1px solid #aaa;border-right:1px solid #aaa}
tr:last-child td{border-bottom:0}
thead tr:last-child th{border-bottom:1px solid #aaa}
.foot{margin:auto 0 0 5px;height:35px;background:#ededed;border:1px solid #c5c5c5;border-width:1px 0 0 1px}
</style><button class="tab">Configurations</button>
<div class="head"><cad-icon name="chevron" style="--s:16px"></cad-icon><b>NumSlots</b><span>(#NumSlots)</span><i>Default: 5</i></div>
<table><thead><tr><th><div>Usages<em>2</em></div></th></tr></thead><tbody><tr><td>#Slots Value</td></tr><tr><td>Circular pattern 2</td></tr></tbody></table><div class="foot"></div>`);

/* ---------- red callouts drawn over the window ---------- */
define('call-outs', `<style>:host{position:absolute;left:0;top:0;pointer-events:none}svg{display:block}</style>
<svg width="1364" height="781" viewBox="0 0 1364 781"><g id="a" fill="#f00"></g>
<g fill="none" stroke="#f00" stroke-width="4"><path d="M47 125h215v30H47zM47 437h215v111H47zM1071 89h285v180h-285zM394 709h48v26h-48zM447 709h79v26h-79z"/></g>
<g fill="#fff" stroke="#f00" stroke-width="4"><circle cx="648.500" cy="140" r="33.500"/><circle cx="332.500" cy="559" r="33.500"/><circle cx="935.500" cy="622" r="33.500"/></g>
<g font-family="Liberation Sans,Arial,sans-serif" font-size="36" fill="#000" text-anchor="middle"><text x="647" y="152">1</text><text x="331" y="571">2</text><text x="935" y="634">1</text></g></svg>`, (el, r) => {
  const arrows = [[648, 140, 264, 140], [648, 140, 1069, 140], [332, 559, 264, 497], [332, 566, 405, 707], [935, 622, 529, 720]];
  r.querySelector('#a').innerHTML = arrows.map(([x1, y1, x2, y2]) => {
    const L = Math.hypot(x2 - x1, y2 - y1), a = Math.atan2(y2 - y1, x2 - x1) * 180 / Math.PI;
    return `<path transform="translate(${x1} ${y1}) rotate(${a.toFixed(2)})" d="M0-3H${(L - 19).toFixed(1)}L${(L - 24).toFixed(1)}-12L${L.toFixed(1)} 0l-24 12 5-9H0z"/>`;
  }).join('');
});

define('cad-app', `<style>
:host{display:flex;flex-direction:column;height:100vh;position:relative;overflow:hidden}
.body{display:flex;flex:1;min-height:0}
.main{display:flex;flex-direction:column;flex:1;min-width:0}
.work{display:flex;flex:1;min-height:0}
</style><cad-header></cad-header><div class="body"><cad-rail></cad-rail><div class="main"><cad-toolbar></cad-toolbar><div class="work"><feature-panel></feature-panel><model-viewport></model-viewport><config-panel></config-panel></div></div></div><call-outs></call-outs>`);
</script>
</body>
</html>
